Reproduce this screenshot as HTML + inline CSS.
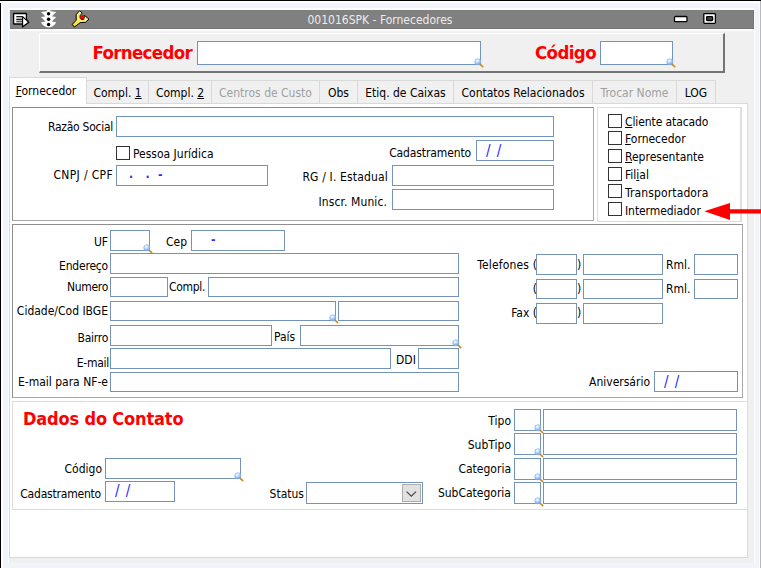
<!DOCTYPE html>
<html lang="pt-BR">
<head>
<meta charset="utf-8">
<title>001016SPK - Fornecedores</title>
<style>
html,body{margin:0;padding:0;}
body{width:761px;height:568px;overflow:hidden;background:#f1f5fb;position:relative;
 font-family:"DejaVu Sans Condensed","DejaVu Sans","Liberation Sans",sans-serif;font-size:12px;color:#000;}
#root{position:absolute;left:0;top:0;width:761px;height:568px;overflow:hidden;background:#f1f5fb;}
.abs,#root div,#root span,#root svg{position:absolute;box-sizing:border-box;}
.bl{left:0;top:0;width:3px;height:568px;background:#fff;border-left:1px solid #000;}
.bt{left:0;top:0;width:761px;height:3px;background:#fff;border-top:1px solid #000;}
.br{left:759px;top:1px;width:2px;height:567px;background:#fafbfd;border-right:1px solid #b9b9bb;}
#win{left:8px;top:8px;width:747px;height:555px;background:#f0f0f0;border-top:2px solid #fdfdfe;border-left:1px solid #fbfcfe;border-right:1px solid #fbfcfe;}
#title{left:10px;top:10px;width:744px;height:19px;background:#808080;color:#fff;border-right:1px solid #777;border-bottom:1px solid #767676;}
#tline{left:9px;top:29px;width:745px;height:2px;background:#fcfcfc;}
#title .cap{left:-2px;width:744px;top:3px;text-align:center;font-size:12px;line-height:14px;color:#ececec;}
.lbl{white-space:nowrap;line-height:14px;height:14px;}
.r{text-align:right;}
.in{background:#fff;border:1px solid #7393ba;}
.blue{color:#2a2aff;white-space:nowrap;line-height:14px;}
.sl{font-size:15px;word-spacing:2px;}
.cb{width:14px;height:14px;background:#fff;border:1px solid #333;}
u{text-decoration:underline;}
#toppanel{left:39px;top:33px;width:686px;height:40px;background:#f0f0f0;border-top:1px solid #fff;border-left:1px solid #fff;border-right:2px solid #747474;border-bottom:2px solid #747474;}
.big{font-weight:bold;color:#ff0000;white-space:nowrap;}
.tab{top:80px;height:23px;background:#f0f0f0;border:1px solid #d9d9d9;border-bottom:none;border-left:none;white-space:nowrap;line-height:14px;padding-top:5px;text-align:center;}
.tab.dis{color:#a0a0a0;}
.tab.sel{top:77px;height:27px;background:#fff;border-left:1px solid #d9d9d9;padding-top:6px;}
#page{left:9px;top:103px;width:739px;height:455px;background:#fff;border:1px solid #d9d9d9;}
.gb{border:1px solid #a8a8a8;border-top-color:#8e8e8e;border-left-color:#8e8e8e;}
.gl{border:1px solid #dedede;}
#root .mg{right:-6.4px;bottom:-5.8px;width:12px;height:12px;overflow:visible;}
</style>
</head>
<body>
<div id="root">
<svg style="left:0;top:0;" width="0" height="0"><defs>
<radialGradient id="lg" cx="0.4" cy="0.3" r="0.75"><stop offset="0" stop-color="#f6fbff"/><stop offset="0.4" stop-color="#c2dcfa"/><stop offset="1" stop-color="#5e97e8"/></radialGradient>

</defs></svg>
<div id="win"></div>
<div id="tline"></div>
<div id="title">
  <div class="cap">001016SPK - Fornecedores</div>
  <svg style="left:0;top:0;overflow:visible;" width="744" height="19" viewBox="10 10 744 19">
    <!-- doc with arrow -->
    <path d="M14.2 13.5 H25.8 Q26.4 13.5 26.4 14.1 V19 L28.7 22.3 L22.6 26.8 V24 H14.2 Q13.6 24 13.6 23.4 V14.1 Q13.6 13.5 14.2 13.5 Z" fill="#fff" stroke="#000" stroke-width="1.3" stroke-linejoin="round"/>
    <rect x="16.3" y="17" width="6" height="2.2" fill="#b4b4b4"/>
    <path d="M16.3 16.5 H22.4 M16.3 19.6 H22.4 M16.3 21.7 H22.4" stroke="#1a1a1a" stroke-width="1.1"/>
    <path d="M22.6 16.6 V26.8 L28.8 22.3 Z" fill="#fff" stroke="#000" stroke-width="1.1" stroke-linejoin="round"/>
    <!-- traffic light -->
    <path d="M46.9 9.6 H50.4 V11.2 L56.3 11.9 Q54 13.9 52.2 16 L52.2 16.5 L56.3 17.1 Q54 19.1 52.2 21.2 L52.2 21.7 L56.3 22.3 Q54.8 25.4 51.6 26.8 Q50.2 27.5 48.6 27.5 Q47 27.5 45.6 26.8 Q42.4 25.4 40.9 22.3 L45 21.7 L45 21.2 Q43.2 19.1 40.9 17.1 L45 16.5 L45 16 Q43.2 13.9 40.9 11.9 L46.9 11.2 Z" fill="#fff"/>
    <circle cx="48.6" cy="13.8" r="1.7" fill="#000"/><circle cx="48.6" cy="19.2" r="1.7" fill="#000"/><circle cx="48.6" cy="24.5" r="1.7" fill="#000"/>
    <!-- wrench -->
    <linearGradient id="wg" gradientUnits="userSpaceOnUse" x1="84" y1="13" x2="73" y2="26"><stop offset="0" stop-color="#fcf8b4"/><stop offset="0.5" stop-color="#f8ef62"/><stop offset="1" stop-color="#f3e000"/></linearGradient>
    <path d="M72.3 24.3 L76.2 20.2 L76.2 14.5 L79.6 10.8 L82.3 13 L80.1 15.5 L80.1 18.3 L81.5 19.5 L83.9 19.2 L84.3 15.3 L88.9 19 L85.6 22.3 L80.2 22.6 L74.4 27.1 Z" fill="url(#wg)" stroke="#000" stroke-width="1" stroke-linejoin="round"/>
    <rect x="80.4" y="15.2" width="3.7" height="3.7" rx="0.5" fill="#f40000"/>
    <!-- minimize -->
    <rect x="674.5" y="16.5" width="12.5" height="5.2" rx="1" fill="#fff" stroke="#000" stroke-width="1.3"/>
    <!-- restore -->
    <rect x="703.8" y="13.6" width="11.6" height="9.8" rx="0.8" fill="#fff" stroke="#000" stroke-width="1.3"/>
    <rect x="706.6" y="16.7" width="6" height="3.8" rx="0.8" fill="#444" stroke="#000" stroke-width="1.3"/>
  </svg>
</div>
<div id="toppanel"></div>
<div class="big" style="left:92.5px;top:41px;font-size:18.5px;line-height:24px;letter-spacing:-0.66px;">Fornecedor</div>
<div class="in" style="left:197px;top:41px;width:284px;height:24px;"><svg class="mg" viewBox="0 0 12 12"><path d="M6.2 6.4 L8.7 8.7" stroke="#c88a1e" stroke-width="1.6" stroke-linecap="round"/><circle cx="3.8" cy="3.8" r="3.1" fill="url(#lg)" stroke="#86b0e8" stroke-width="0.6"/></svg></div>
<div class="big" style="left:535px;top:41px;font-size:18.5px;line-height:24px;letter-spacing:-0.6px;">Código</div>
<div class="in" style="left:600px;top:41px;width:73px;height:24px;"><svg class="mg" viewBox="0 0 12 12"><path d="M6.2 6.4 L8.7 8.7" stroke="#c88a1e" stroke-width="1.6" stroke-linecap="round"/><circle cx="3.8" cy="3.8" r="3.1" fill="url(#lg)" stroke="#86b0e8" stroke-width="0.6"/></svg></div>

<!-- tabs -->
<div id="page"></div>
<div class="tab sel" style="left:9px;width:78px;padding-right:4px;"><u>F</u>ornecedor</div>
<div class="tab" style="left:87px;width:62px;">Compl. <u>1</u></div>
<div class="tab" style="left:149px;width:63px;">Compl. <u>2</u></div>
<div class="tab dis" style="left:212px;width:108px;">Centros de Custo</div>
<div class="tab" style="left:320px;width:38px;">Obs</div>
<div class="tab" style="left:358px;width:96px;">Etiq. de Caixas</div>
<div class="tab" style="left:454px;width:139px;">Contatos Relacionados</div>
<div class="tab dis" style="left:593px;width:84px;">Trocar Nome</div>
<div class="tab" style="left:677px;width:39px;">LOG</div>

<!-- group 1 -->
<div class="gb" style="left:12px;top:107px;width:582px;height:114px;"></div>
<div class="lbl r" style="left:13px;width:100px;top:120px;letter-spacing:-0.27px;">Razão Social</div>
<div class="in" style="left:116px;top:116px;width:438px;height:21px;"></div>
<div class="cb" style="left:116px;top:146px;"></div>
<div class="lbl" style="left:133px;top:147px;">Pessoa Jurídica</div>
<div class="lbl r" style="left:13px;width:100px;top:168px;letter-spacing:0.35px;">CNPJ / CPF</div>
<div class="in" style="left:116px;top:165px;width:152px;height:21px;"></div>
<div class="blue" style="left:129px;top:167px;font-weight:bold;">.</div><div class="blue" style="left:145.5px;top:167px;font-weight:bold;">.</div><div class="blue" style="left:158px;top:168px;font-weight:bold;">-</div>
<div class="lbl r" style="left:371px;width:100px;top:146px;letter-spacing:-0.12px;">Cadastramento</div>
<div class="in" style="left:476px;top:140px;width:78px;height:21px;"></div>
<div class="blue sl" style="left:486px;top:144px;">/ /</div>
<div class="lbl r" style="left:288px;width:100px;top:170px;letter-spacing:0.16px;">RG / I. Estadual</div>
<div class="in" style="left:392px;top:165px;width:162px;height:21px;"></div>
<div class="lbl r" style="left:287px;width:100px;top:195px;letter-spacing:0.1px;">Inscr. Munic.</div>
<div class="in" style="left:392px;top:189px;width:162px;height:21px;"></div>

<!-- group 2 -->
<div class="gl" style="left:597px;top:107px;width:145px;height:115px;border-right-width:2px;"></div>
<div class="cb" style="left:608px;top:114px;"></div><div class="lbl" style="left:625px;top:115px;letter-spacing:-0.1px;"><u>C</u>liente atacado</div>
<div class="cb" style="left:608px;top:131px;"></div><div class="lbl" style="left:625px;top:132px;"><u>F</u>ornecedor</div>
<div class="cb" style="left:608px;top:149px;"></div><div class="lbl" style="left:625px;top:150px;"><u>R</u>epresentante</div>
<div class="cb" style="left:608px;top:167px;"></div><div class="lbl" style="left:625px;top:168px;">Fil<u>i</u>al</div>
<div class="cb" style="left:608px;top:184px;"></div><div class="lbl" style="left:625px;top:186px;letter-spacing:0.13px;">Transportadora</div>
<div class="cb" style="left:608px;top:202px;"></div><div class="lbl" style="left:625px;top:204px;letter-spacing:-0.07px;">Intermediador</div>


<!-- group 3 -->
<div class="gb" style="left:12px;top:224px;width:731px;height:174px;"></div>
<div class="lbl r" style="left:8px;width:100px;top:235px;">UF</div>
<div class="in" style="left:110px;top:230px;width:40px;height:21px;"><svg class="mg" viewBox="0 0 12 12"><path d="M6.2 6.4 L8.7 8.7" stroke="#c88a1e" stroke-width="1.6" stroke-linecap="round"/><circle cx="3.8" cy="3.8" r="3.1" fill="url(#lg)" stroke="#86b0e8" stroke-width="0.6"/></svg></div>
<div class="lbl" style="left:166px;top:235px;">Cep</div>
<div class="in" style="left:191px;top:230px;width:94px;height:21px;"></div>
<div class="blue" style="left:211px;top:233px;font-weight:bold;">-</div>
<div class="lbl r" style="left:8px;width:100px;top:259px;letter-spacing:-0.2px;">Endereço</div>
<div class="in" style="left:110px;top:253px;width:349px;height:21px;"></div>
<div class="lbl r" style="left:8px;width:100px;top:280px;letter-spacing:-0.3px;">Numero</div>
<div class="in" style="left:110px;top:277px;width:58px;height:20px;"></div>
<div class="lbl" style="left:169px;top:280px;letter-spacing:-0.3px;">Compl.</div>
<div class="in" style="left:208px;top:277px;width:251px;height:20px;"></div>
<div class="lbl r" style="left:8px;width:100px;top:304px;">Cidade/Cod IBGE</div>
<div class="in" style="left:110px;top:301px;width:226px;height:20px;"><svg class="mg" viewBox="0 0 12 12"><path d="M6.2 6.4 L8.7 8.7" stroke="#c88a1e" stroke-width="1.6" stroke-linecap="round"/><circle cx="3.8" cy="3.8" r="3.1" fill="url(#lg)" stroke="#86b0e8" stroke-width="0.6"/></svg></div>
<div class="in" style="left:338px;top:301px;width:121px;height:20px;"></div>
<div class="lbl r" style="left:8px;width:100px;top:331px;letter-spacing:-0.25px;">Bairro</div>
<div class="in" style="left:110px;top:325px;width:162px;height:21px;"></div>
<div class="lbl" style="left:274px;top:330px;">País</div>
<div class="in" style="left:300px;top:325px;width:159px;height:21px;"><svg class="mg" viewBox="0 0 12 12"><path d="M6.2 6.4 L8.7 8.7" stroke="#c88a1e" stroke-width="1.6" stroke-linecap="round"/><circle cx="3.8" cy="3.8" r="3.1" fill="url(#lg)" stroke="#86b0e8" stroke-width="0.6"/></svg></div>
<div class="lbl r" style="left:9px;width:100px;top:356px;letter-spacing:-0.27px;">E-mail</div>
<div class="in" style="left:110px;top:348px;width:281px;height:21px;"></div>
<div class="lbl" style="left:396px;top:353px;">DDI</div>
<div class="in" style="left:418px;top:348px;width:41px;height:21px;"></div>
<div class="lbl r" style="left:8px;width:100px;top:375px;">E-mail para NF-e</div>
<div class="in" style="left:110px;top:372px;width:349px;height:20px;"></div>

<div class="lbl r" style="left:437px;width:100px;top:258px;letter-spacing:0.15px;">Telefones (</div>
<div class="in" style="left:536px;top:254px;width:41px;height:21px;"></div>
<div class="lbl" style="left:577px;top:258px;">)</div>
<div class="in" style="left:583px;top:254px;width:80px;height:21px;"></div>
<div class="lbl" style="left:666px;top:258px;">Rml.</div>
<div class="in" style="left:694px;top:254px;width:44px;height:21px;"></div>
<div class="lbl r" style="left:437px;width:100px;top:282px;">(</div>
<div class="in" style="left:536px;top:279px;width:41px;height:20px;"></div>
<div class="lbl" style="left:577px;top:282px;">)</div>
<div class="in" style="left:583px;top:279px;width:80px;height:20px;"></div>
<div class="lbl" style="left:666px;top:282px;">Rml.</div>
<div class="in" style="left:694px;top:279px;width:44px;height:20px;"></div>
<div class="lbl r" style="left:437px;width:100px;top:306px;">Fax (</div>
<div class="in" style="left:536px;top:303px;width:41px;height:21px;"></div>
<div class="lbl" style="left:577px;top:306px;">)</div>
<div class="in" style="left:583px;top:303px;width:80px;height:21px;"></div>
<div class="lbl r" style="left:550px;width:100px;top:375px;">Aniversário</div>
<div class="in" style="left:654px;top:371px;width:84px;height:21px;"></div>
<div class="blue sl" style="left:664px;top:375px;">/ /</div>

<!-- contact panel -->
<div class="gl" style="left:12px;top:401px;width:736px;height:109px;"></div>
<div class="big" style="left:23px;top:408px;font-size:18px;line-height:22px;letter-spacing:-0.15px;">Dados do Contato</div>
<div class="lbl r" style="left:2px;width:100px;top:462px;">Código</div>
<div class="in" style="left:105px;top:458px;width:136px;height:21px;"><svg class="mg" viewBox="0 0 12 12"><path d="M6.2 6.4 L8.7 8.7" stroke="#c88a1e" stroke-width="1.6" stroke-linecap="round"/><circle cx="3.8" cy="3.8" r="3.1" fill="url(#lg)" stroke="#86b0e8" stroke-width="0.6"/></svg></div>
<div class="lbl r" style="left:1px;width:100px;top:487px;letter-spacing:-0.2px;">Cadastramento</div>
<div class="in" style="left:105px;top:481px;width:70px;height:21px;"></div>
<div class="blue sl" style="left:115px;top:484px;">/ /</div>
<div class="lbl r" style="left:204px;width:100px;top:487px;">Status</div>
<div class="in" style="left:306px;top:482px;width:117px;height:22px;"><div style="right:1px;top:1px;width:19px;height:18px;background:#e1e1e1;border:1px solid #adadad;"></div><svg style="right:1px;top:1px;" width="19" height="18" viewBox="0 0 19 18"><path d="M4.6 7.6 L9.3 12.1 L14 7.6" fill="none" stroke="#444" stroke-width="1.2"/></svg></div>

<div class="lbl r" style="left:411px;width:100px;top:414px;">Tipo</div>
<div class="in" style="left:514px;top:409px;width:27px;height:22px;"><svg class="mg" viewBox="0 0 12 12"><path d="M6.2 6.4 L8.7 8.7" stroke="#c88a1e" stroke-width="1.6" stroke-linecap="round"/><circle cx="3.8" cy="3.8" r="3.1" fill="url(#lg)" stroke="#86b0e8" stroke-width="0.6"/></svg></div>
<div class="in" style="left:543px;top:409px;width:194px;height:22px;"></div>
<div class="lbl r" style="left:411px;width:100px;top:438px;">SubTipo</div>
<div class="in" style="left:514px;top:433px;width:27px;height:22px;"><svg class="mg" viewBox="0 0 12 12"><path d="M6.2 6.4 L8.7 8.7" stroke="#c88a1e" stroke-width="1.6" stroke-linecap="round"/><circle cx="3.8" cy="3.8" r="3.1" fill="url(#lg)" stroke="#86b0e8" stroke-width="0.6"/></svg></div>
<div class="in" style="left:543px;top:433px;width:194px;height:22px;"></div>
<div class="lbl r" style="left:411px;width:100px;top:462px;">Categoria</div>
<div class="in" style="left:514px;top:458px;width:27px;height:22px;"><svg class="mg" viewBox="0 0 12 12"><path d="M6.2 6.4 L8.7 8.7" stroke="#c88a1e" stroke-width="1.6" stroke-linecap="round"/><circle cx="3.8" cy="3.8" r="3.1" fill="url(#lg)" stroke="#86b0e8" stroke-width="0.6"/></svg></div>
<div class="in" style="left:543px;top:458px;width:194px;height:22px;"></div>
<div class="lbl r" style="left:411px;width:100px;top:486px;">SubCategoria</div>
<div class="in" style="left:514px;top:482px;width:27px;height:22px;"><svg class="mg" viewBox="0 0 12 12"><path d="M6.2 6.4 L8.7 8.7" stroke="#c88a1e" stroke-width="1.6" stroke-linecap="round"/><circle cx="3.8" cy="3.8" r="3.1" fill="url(#lg)" stroke="#86b0e8" stroke-width="0.6"/></svg></div>
<div class="in" style="left:543px;top:482px;width:194px;height:22px;"></div>

<div class="bl"></div><div class="bt"></div><div class="br"></div>
<svg style="left:700px;top:198px;" width="61" height="26" viewBox="700 198 61 26"><path d="M704.3 211.3 L730 202.9 L730 209.2 L761 209.2 L761 213.5 L730 213.5 L730 220 Z" fill="#ff0000"/></svg>

</div>
</body>
</html>
